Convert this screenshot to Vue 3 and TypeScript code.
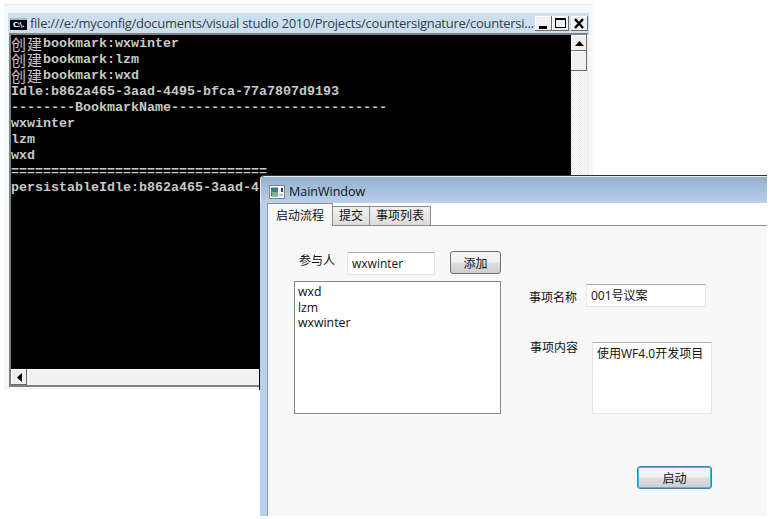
<script setup lang="ts">
interface ConLine { cn: string; text: string }
const lines: ConLine[] = [
  { cn: '创建', text: 'bookmark:wxwinter' },
  { cn: '创建', text: 'bookmark:lzm' },
  { cn: '创建', text: 'bookmark:wxd' },
  { cn: '', text: 'Idle:b862a465-3aad-4495-bfca-77a7807d9193' },
  { cn: '', text: '--------BookmarkName---------------------------' },
  { cn: '', text: 'wxwinter' },
  { cn: '', text: 'lzm' },
  { cn: '', text: 'wxd' },
  { cn: '', text: '================================' },
  { cn: '', text: 'persistableIdle:b862a465-3aad-4495-bfca-77a7807d9193' },
]
const tabs: string[] = ['提交', '事项列表']
const people: string[] = ['wxd', 'lzm', 'wxwinter']
</script>

<template>
  <div class="desk">
    <section class="console">
      <header class="con-title">
        <span class="con-icon">C:\.</span>
        <span class="con-name">file:///e:/myconfig/documents/visual studio 2010/Projects/countersignature/countersi...</span>
        <span class="con-btns">
          <span class="wbtn"><svg width="17" height="15" viewBox="0 0 17 15"><rect x="4" y="10" width="8" height="3" fill="#000" /></svg></span>
          <span class="wbtn"><svg width="17" height="15" viewBox="0 0 17 15"><rect x="3.5" y="2.5" width="10" height="9" fill="none" stroke="#000" /><rect x="3" y="2" width="11" height="2" fill="#000" /></svg></span>
          <span class="wbtn close"><svg width="17" height="15" viewBox="0 0 17 15"><path d="M4 3l8 9M12 3l-8 9" stroke="#000" stroke-width="2.4" /></svg></span>
        </span>
      </header>
      <div class="con-body">
        <div class="con-main">
          <div class="con-text">
            <div v-for="l in lines" :key="l.text" class="con-line"><span v-if="l.cn" class="cn">{{ l.cn }}</span><span>{{ l.text }}</span></div>
          </div>
          <div class="vbar">
            <span class="sbtn"><svg width="9" height="5" viewBox="0 0 9 5"><path d="M4.500 0L9 5H0z" fill="#000" /></svg></span>
            <span class="thumb"></span>
          </div>
        </div>
        <div class="hbar">
          <span class="sbtn"><svg width="5" height="9" viewBox="0 0 5 9"><path d="M0 4.500L5 0v9z" fill="#000" /></svg></span>
          <span class="hthumb"></span>
        </div>
      </div>
    </section>

    <section class="main">
      <header class="main-title">
        <svg class="main-icon" width="16" height="14" viewBox="0 0 16 14">
          <rect x=".5" y=".5" width="15" height="13" fill="#f4f6f8" stroke="#7d8790" />
          <rect x="2" y="2.500" width="7" height="9" fill="#3f7a86" />
          <rect x="3" y="7" width="6" height="4" fill="#7fb08f" />
          <rect x="12" y="3" width="2" height="4" fill="#404040" />
          <rect x="10" y="9" width="4" height="2" fill="#b8bec4" />
        </svg>
        <span>MainWindow</span>
      </header>
      <nav class="tabs">
        <span class="tab active">启动流程</span>
        <span v-for="t in tabs" :key="t" class="tab">{{ t }}</span>
      </nav>
      <div class="pane">
        <div class="left">
          <div class="row">
            <label class="who">参与人</label>
            <div class="field name">wxwinter</div>
            <button class="btn add" type="button">添加</button>
          </div>
          <ul class="list">
            <li v-for="p in people" :key="p">{{ p }}</li>
          </ul>
        </div>
        <div class="right">
          <div class="item">
            <label>事项名称</label>
            <div class="field title-f">001号议案</div>
          </div>
          <div class="item second">
            <label>事项内容</label>
            <div class="field content">使用WF4.0开发项目</div>
          </div>
          <button class="btn start" type="button">启动</button>
        </div>
      </div>
    </section>
  </div>
</template>

<style scoped>
.desk {
  position: relative;
  width: 772px;
  height: 519px;
  overflow: hidden;
  background: #fff;
  font-family: "Open Sans", "Noto Sans CJK SC", sans-serif;
  color: #111;
}
.console {
  position: absolute;
  left: 4px;
  top: 4px;
  width: 589px;
  height: 386px;
  box-sizing: border-box;
  padding: 8px 4px 3px 5px;
  background: #f5f8fb;
  border-top: 1px solid #ececec;
  display: flex;
  flex-direction: column;
}
.con-title {
  height: 20px;
  flex: none;
  background: #cddfee;
  margin: 0 0 0 -1px;
  padding: 0 1px 0 2px;
  display: flex;
  align-items: center;
  font: 13px "Open Sans", sans-serif;
  letter-spacing: -0.27px;
  color: #33414d;
}
.con-icon {
  width: 17px;
  height: 12px;
  margin: 1px 3px 0 0;
  background: #000;
  color: #fff;
  border-top: 2px solid #a9b8c7;
  box-sizing: border-box;
  font: bold 7px/10px "DejaVu Sans", sans-serif;
  letter-spacing: -0.5px;
  text-align: center;
  overflow: hidden;
  flex: none;
}
.con-name {
  flex: 1;
  white-space: nowrap;
  min-width: 0;
}
.con-btns {
  display: flex;
  flex: none;
}
.wbtn {
  width: 17px;
  height: 15px;
  background: #f0f0f0;
  box-shadow: inset -1px -1px 0 #6b6b6b, inset 1px 1px 0 #fff;
  display: block;
}
.wbtn svg { display: block; }
.close { margin-left: 2px; }
.con-body {
  flex: 1;
  border: 2px solid #808080;
  border-right-color: #eee;
  border-bottom-color: #808080;
  display: flex;
  flex-direction: column;
  min-height: 0;
}
.con-main {
  flex: 1;
  display: flex;
  min-height: 0;
}
.con-text {
  flex: 1;
  background: #000;
  color: #c8c8c8;
  padding-top: 1px;
  font: bold 13.33px/16px "Liberation Mono", "Noto Sans CJK SC", monospace;
  overflow: hidden;
}
.con-line {
  display: flex;
  height: 16px;
  white-space: pre;
}
.cn {
  font: 400 15px/15px "Noto Sans CJK SC", sans-serif;
  letter-spacing: 1px;
  color: #c4c4c4;
}
.vbar {
  width: 16px;
  flex: none;
  background: repeating-conic-gradient(#fff 0 25%, #e8e8e8 0 50%) 0 0 / 2px 2px;
  display: flex;
  flex-direction: column;
}
.sbtn {
  display: flex;
  align-items: center;
  justify-content: center;
  width: 16px;
  height: 16px;
  background: #f0f0f0;
  box-shadow: inset -1px -1px 0 #6b6b6b, inset 1px 1px 0 #fff;
  flex: none;
}
.thumb {
  height: 20px;
  background: #f0f0f0;
  box-shadow: inset -1px -1px 0 #6b6b6b, inset 1px 1px 0 #fff;
}
.hbar {
  height: 16px;
  display: flex;
  flex: none;
  background: #f0f0f0;
}
.hthumb {
  flex: 1;
  margin-left: 1px;
  background: #f0f0f0;
  box-shadow: inset 1px 1px 0 #fff;
}
.main {
  position: absolute;
  left: 260px;
  top: 175px;
  width: 507px;
  height: 341px;
  box-sizing: border-box;
  border-radius: 5px 0 0 0;
  background: #b9d1ea;
  display: flex;
  flex-direction: column;
}
.main::before {
  content: "";
  position: absolute;
  left: 7px;
  top: 28px;
  bottom: 0;
  width: 1px;
  background: #8b99a8;
}
.main::after {
  content: "";
  position: absolute;
  left: -1px;
  top: 3px;
  height: 212px;
  width: 1px;
  background: #000;
}
.main-title {
  height: 28px;
  flex: none;
  box-sizing: border-box;
  padding: 4px 0 0 8px;
  border-top: 1px solid #333;
  border-left: 1px solid #e6edf4;
  border-radius: 5px 0 0 0;
  background: linear-gradient(#e8eef5 0 1px, #95afcc 1px, #b9d1ea);
  display: flex;
  align-items: center;
  gap: 4px;
  font: 12.5px "Open Sans", sans-serif;
  color: #0d1520;
}
.main-icon { flex: none; }
.tabs {
  height: 23px;
  flex: none;
  box-sizing: border-box;
  margin-left: 8px;
  background: #fff;
  border-bottom: 1px solid #8c8c8c;
  display: flex;
  align-items: flex-end;
  font-size: 12px;
}
.tab {
  height: 20px;
  box-sizing: border-box;
  margin-bottom: -1px;
  border: 1px solid #8c8c8c;
  border-left: 0;
  background: linear-gradient(#f2f2f2, #dcdcdc);
  padding: 0 6px;
  line-height: 18px;
}
.tab.active {
  height: 23px;
  margin-left: -1px;
  border-left: 1px solid #8c8c8c;
  border-bottom: 0;
  background: #f8f8f8;
  padding: 0 8px;
  line-height: 23px;
}
.pane {
  flex: 1;
  margin-left: 8px;
  background: #f8f8f8;
  display: flex;
  min-height: 0;
  font-size: 12px;
}
.left {
  width: 226px;
  padding: 24px 0 0 26px;
  flex: none;
}
.row {
  display: flex;
  align-items: center;
  height: 26px;
}
.who {
  width: 48px;
  margin-left: 5px;
  flex: none;
  position: relative;
  top: -3px;
}
.field {
  box-sizing: border-box;
  background: #fff;
  border: 1px solid #e1e6ed;
  border-top-color: #abadb3;
}
.name {
  width: 88px;
  height: 23px;
  line-height: 21px;
  padding-left: 4px;
  font-size: 12px;
  flex: none;
}
.btn {
  box-sizing: border-box;
  border: 1px solid #707070;
  border-radius: 3px;
  background: linear-gradient(#f2f2f2 0 48%, #dddddd 52%, #cfcfcf);
  font: 12px "Open Sans", "Noto Sans CJK SC", sans-serif;
  color: #111;
  padding: 0;
}
.add {
  width: 51px;
  height: 23px;
  margin: -1px 0 0 15px;
  flex: none;
}
.list {
  list-style: none;
  margin: 5px 0 0;
  padding: 2px 0 0 3px;
  width: 207px;
  height: 133px;
  box-sizing: border-box;
  background: #fff;
  border: 1px solid #828790;
  font-size: 12.3px;
  line-height: 15.5px;
}
.right {
  flex: 1;
  padding: 58px 0 0 9px;
  min-width: 0;
}
.item {
  display: flex;
  align-items: flex-start;
}
.item label {
  width: 57px;
  flex: none;
  padding-top: 4px;
}
.title-f {
  width: 120px;
  height: 23px;
  line-height: 21px;
  padding-left: 4px;
  font-size: 12px;
}
.second {
  margin-top: 35px;
  margin-left: 1px;
}
.second label { width: 62px; padding-top: 0; margin-top: -4px; }
.content {
  width: 120px;
  height: 72px;
  padding: 2px 4px;
  line-height: 18px;
  font-size: 12px;
  white-space: nowrap;
}
.start {
  width: 75px;
  height: 23px;
  display: block;
  margin: 52px 0 0 108px;
  border-color: #3c7fb1;
  box-shadow: inset 0 0 0 1px #37c0e8;
}
</style>
